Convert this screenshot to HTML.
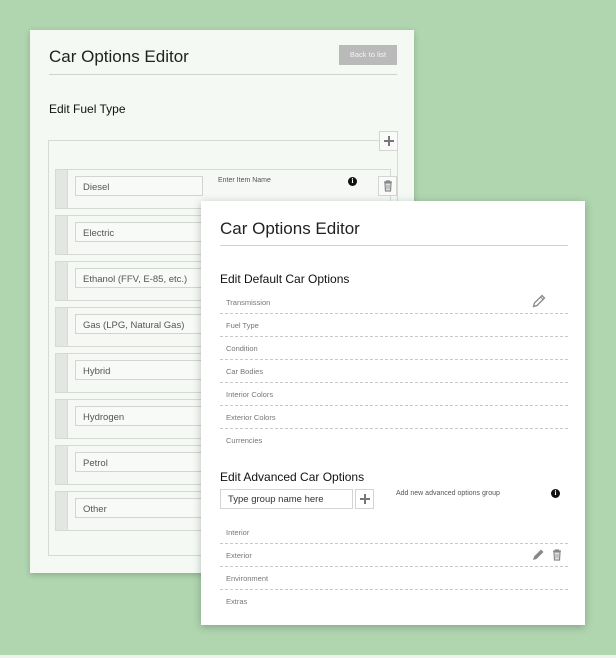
<!DOCTYPE html>
<html><head><style>
*{box-sizing:border-box;margin:0;padding:0}
body{width:616px;height:658px;background:#b0d6b0;font-family:"Liberation Sans",sans-serif;position:relative;overflow:hidden}
.abs{position:absolute}
.back{left:30px;top:30px;width:384px;height:543px;background:#f4f9f3;box-shadow:0 2px 6px rgba(0,0,0,.2)}
.front{left:201px;top:201px;width:384px;height:424px;background:#fff;box-shadow:0 2px 8px rgba(0,0,0,.25)}
.h1{font-size:17px;color:#222}
.h2{font-size:12px;color:#111}
.row{position:absolute;left:25px;width:336px;height:40px;border:1px solid #d6d9d4;background:#f5f8f4}
.row .hd{position:absolute;left:0;top:0;width:12px;height:38px;background:#e4e6e2;border-right:1px solid #d6d9d4}
.row .in{position:absolute;left:19px;top:6px;width:128px;height:20px;border:1px solid #d2d5d0;background:#f8faf7;font-size:9.5px;color:#555;padding:5px 0 0 7px}
.btn{position:absolute;width:19px;height:20px;border:1px solid #d2d5d0;background:#fafafa;text-align:center}
.it{position:absolute;left:19px;width:348px;height:23px;border-bottom:1px dashed #c8c8c8;font-size:7.5px;color:#777;padding-top:7px;padding-left:6px}
.info{position:absolute;width:9px;height:9px;border-radius:50%;background:#111;color:#fff;font-size:7px;font-weight:bold;text-align:center;line-height:9px;font-family:"Liberation Serif",serif}
</style></head><body>
<div class="abs" style="left:0;top:655px;width:616px;height:3px;background:#eef3ee"></div>
<div class="abs back">
 <div class="abs h1" style="left:19px;top:17px">Car Options Editor</div>
 <div class="abs" style="left:309px;top:15px;width:58px;height:20px;background:#b9bab9;color:#f4f4f4;font-size:7.5px;text-align:center;line-height:20px">Back to list</div>
 <div class="abs" style="left:19px;top:44px;width:348px;height:1px;background:#cfd3ce"></div>
 <div class="abs h2" style="left:19px;top:72px">Edit Fuel Type</div>
 <div class="abs" style="left:18px;top:110px;width:350px;height:416px;border:1px solid #d6d9d4"></div>
 <div class="btn" style="left:349px;top:101px"><svg width="10" height="10" viewBox="0 0 10 10" style="margin-top:4px"><path d="M5 0v10M0 5h10" stroke="#777" stroke-width="2"/></svg></div>
 <div class="row" style="top:139px"><div class="hd"></div><div class="in">Diesel</div></div>
 <div class="row" style="top:185px"><div class="hd"></div><div class="in">Electric</div></div>
 <div class="row" style="top:231px"><div class="hd"></div><div class="in">Ethanol (FFV, E-85, etc.)</div></div>
 <div class="row" style="top:277px"><div class="hd"></div><div class="in">Gas (LPG, Natural Gas)</div></div>
 <div class="row" style="top:323px"><div class="hd"></div><div class="in">Hybrid</div></div>
 <div class="row" style="top:369px"><div class="hd"></div><div class="in">Hydrogen</div></div>
 <div class="row" style="top:415px"><div class="hd"></div><div class="in">Petrol</div></div>
 <div class="row" style="top:461px"><div class="hd"></div><div class="in">Other</div></div>
 <div class="abs" style="left:188px;top:147px;font-size:7px;color:#555">Enter Item Name</div>
 <div class="info" style="left:318px;top:147px">i</div>
 <div class="btn" style="left:348px;top:146px"><svg width="10" height="12" viewBox="0 0 10 12" style="margin-top:3px"><path d="M1 2h8M3.5 2V1h3v1M2 3h6l-.5 8h-5z" fill="none" stroke="#888" stroke-width="1.2"/><path d="M4 4.5v5M6 4.5v5" stroke="#888"/></svg></div>
</div>
<div class="abs front">
 <div class="abs h1" style="left:19px;top:18px">Car Options Editor</div>
 <div class="abs" style="left:19px;top:44px;width:348px;height:1px;background:#d0d0d0"></div>
 <div class="abs h2" style="left:19px;top:71px">Edit Default Car Options</div>
 <div class="it" style="top:90px">Transmission</div>
 <div class="it" style="top:113px">Fuel Type</div>
 <div class="it" style="top:136px">Condition</div>
 <div class="it" style="top:159px">Car Bodies</div>
 <div class="it" style="top:182px">Interior Colors</div>
 <div class="it" style="top:205px">Exterior Colors</div>
 <div class="it" style="top:228px;border:none">Currencies</div>
 <svg class="abs" style="left:331px;top:93px" width="14" height="14" viewBox="0 0 14 14"><path d="M1.5 12.5l1-3.5 7.5-7.5 2.5 2.5L5 11.5z" fill="#fff" stroke="#888" stroke-width="1.3"/><path d="M8.5 3l2.5 2.5" stroke="#888"/></svg>
 <div class="abs h2" style="left:19px;top:269px">Edit Advanced Car Options</div>
 <div class="abs" style="left:19px;top:288px;width:133px;height:20px;border:1px solid #d4d4d4;font-size:9.5px;color:#333;padding:4px 0 0 7px">Type group name here</div>
 <div class="btn" style="left:154px;top:288px;background:#fff"><svg width="10" height="10" viewBox="0 0 10 10" style="margin-top:4px"><path d="M5 0v10M0 5h10" stroke="#777" stroke-width="2"/></svg></div>
 <div class="abs" style="left:195px;top:289px;font-size:7px;color:#555">Add new advanced options group</div>
 <div class="info" style="left:350px;top:288px">i</div>
 <div class="it" style="top:320px">Interior</div>
 <div class="it" style="top:343px">Exterior</div>
 <div class="it" style="top:366px">Environment</div>
 <div class="it" style="top:389px;border:none">Extras</div>
 <svg class="abs" style="left:331px;top:347px" width="13" height="13" viewBox="0 0 13 13"><path d="M1 12l1-3.5 7-7 2.5 2.5-7 7z" fill="#888"/></svg>
 <svg class="abs" style="left:351px;top:348px" width="10" height="12" viewBox="0 0 10 12"><path d="M1 2h8M3.5 2V1h3v1M2 3h6l-.5 8h-5z" fill="none" stroke="#888" stroke-width="1.2"/><path d="M4 4.5v5M6 4.5v5" stroke="#888"/></svg>
</div>
</body></html>
